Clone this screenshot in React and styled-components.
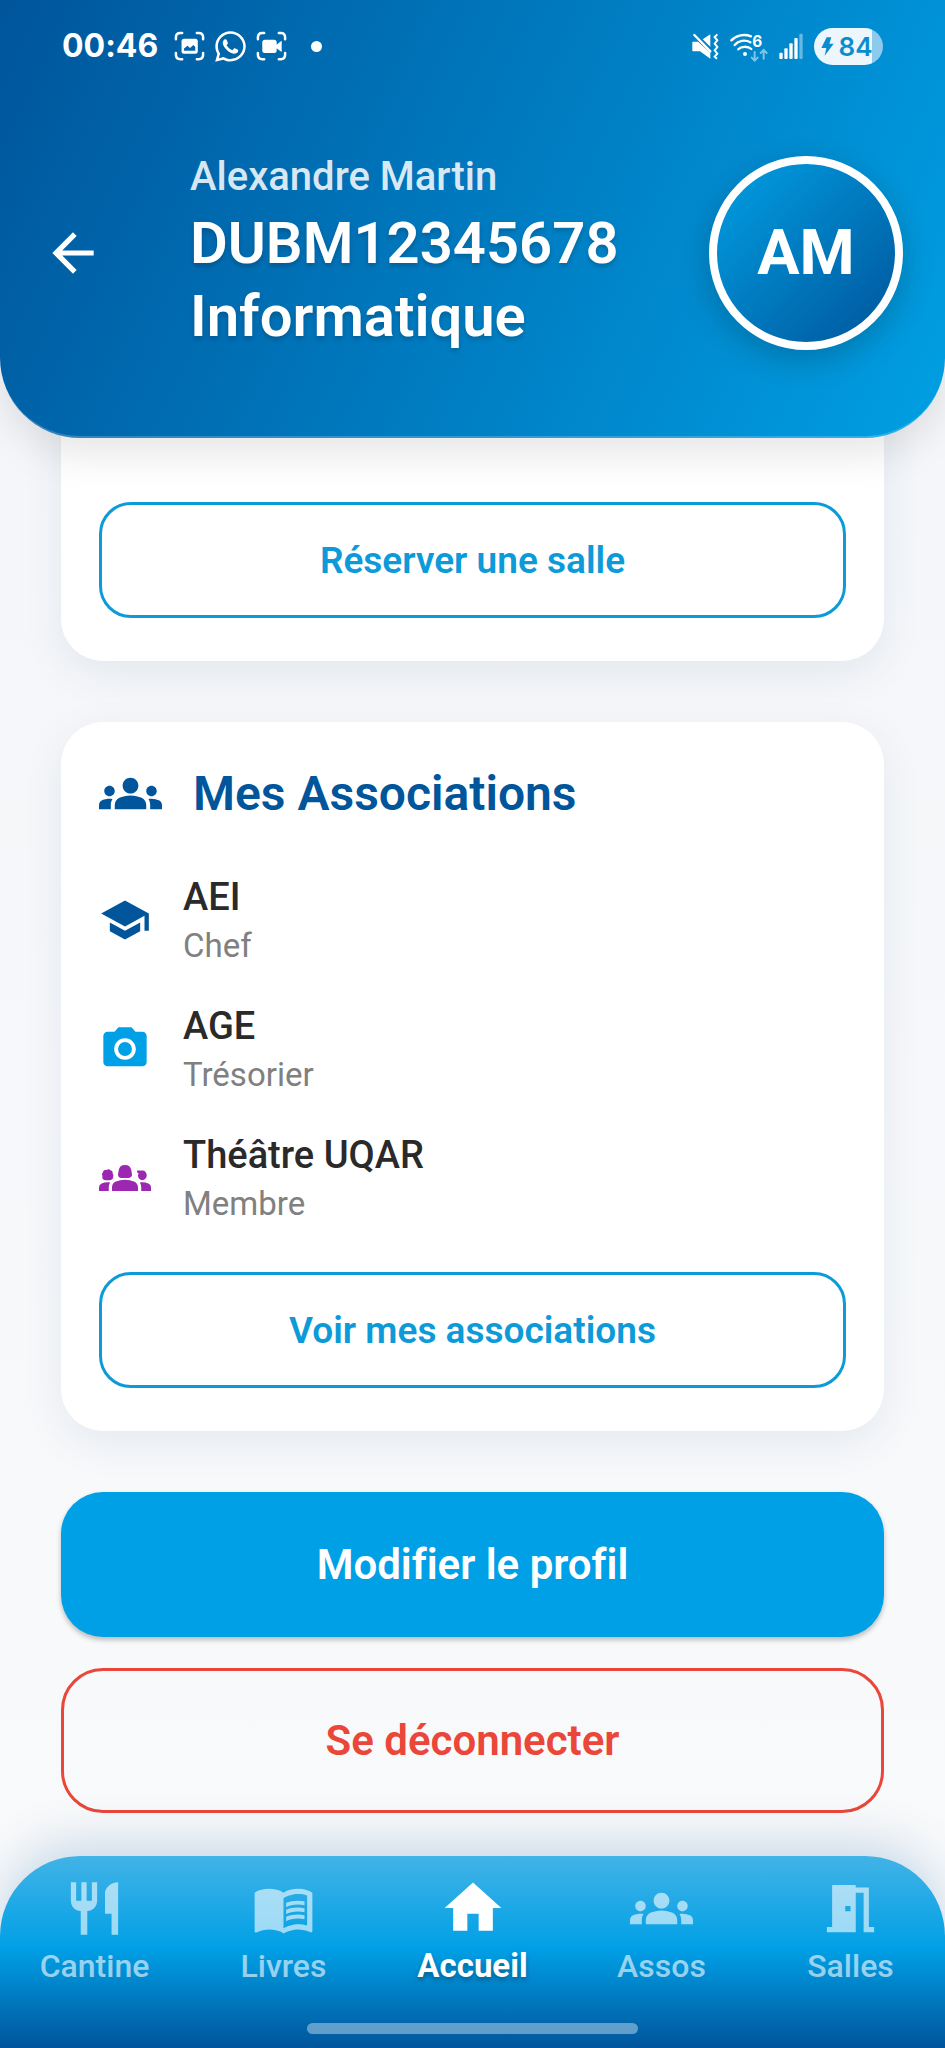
import React from "react";
import styled, { createGlobalStyle, css } from "styled-components";
import {
  MdArrowBack,
  MdGroups,
  MdGroups2,
  MdHome,
  MdMeetingRoom,
  MdMenuBook,
  MdPhotoCamera,
  MdRestaurant,
  MdSchool,
} from "react-icons/md";
import { FaWhatsapp } from "react-icons/fa";

const navy = "#00559b";
const sky = "#009fe3";
const skySoft = "#0c9ad8";
const red = "#ea4639";

const GlobalStyle = createGlobalStyle`
  *, *::before, *::after { box-sizing: border-box; }
  body {
    margin: 0;
    background: #f8fafb;
    font-family: Roboto, "Liberation Sans", sans-serif;
    font-variant-ligatures: none;
  }
  h1, h2, p, ul { margin: 0; padding: 0; }
  ul { list-style: none; }
  svg { display: block; flex: none; }
`;

const Screen = styled.div`
  display: flex;
  flex-direction: column;
  min-height: 100vh;
  background: linear-gradient(#f3f5f9, #f9fafb);
`;

const Header = styled.header`
  position: sticky;
  top: 0;
  z-index: 2;
  border-bottom: 2px solid rgba(255, 255, 255, 0.2);
  border-radius: 0 0 80px 80px;
  background: linear-gradient(115deg, ${navy}, ${sky}) border-box;
  box-shadow: 0 16px 40px rgba(0, 0, 0, 0.1);
  color: #fff;
`;

const StatusBar = styled.div`
  display: flex;
  align-items: center;
  justify-content: space-between;
  height: 92px;
  padding: 0 62px;
  font-family: Inter, sans-serif;
`;

const StatusGroup = styled.div`
  display: flex;
  align-items: center;
  gap: ${(p) => p.$gap}px;
`;

const Clock = styled.time`
  margin-right: 8px;
  font-size: 32px;
  font-weight: 700;
  line-height: 40px;
`;

const Dot = styled.span`
  width: 11px;
  height: 11px;
  margin-left: 16px;
  border-radius: 50%;
  background: #fff;
`;

const Battery = styled.span`
  display: flex;
  align-items: center;
  justify-content: center;
  gap: 5px;
  width: 69px;
  height: 37px;
  padding-right: 4px;
  border-radius: 19px;
  background: linear-gradient(90deg, #ecf6fc 84%, #8ccaee 84%);
  color: #0a8dcd;
  font-size: 26px;
  font-weight: 600;
`;

const Identity = styled.div`
  display: flex;
  align-items: center;
  padding: 60px 42px 83px;
`;

const BackButton = styled.button`
  margin-right: 86px;
  padding: 0;
  border: 0;
  background: none;
  color: inherit;
  font-size: 62px;
`;

const IdentityText = styled.div`
  display: flex;
  flex: 1;
  flex-direction: column;
  gap: 5px;
`;

const PersonName = styled.p`
  color: rgba(255, 255, 255, 0.85);
  font-size: 40px;
  font-weight: 500;
  line-height: 50px;
`;

const PersonCode = styled.h1`
  font-size: 58px;
  font-weight: 600;
  line-height: 73px;
  text-shadow: 0 3px 5px rgba(0, 0, 0, 0.2);
`;

const Avatar = styled.div`
  display: flex;
  align-items: center;
  justify-content: center;
  width: 194px;
  height: 194px;
  border: 8px solid #fff;
  border-radius: 50%;
  background: linear-gradient(135deg, ${sky}, ${navy});
  box-shadow: 0 10px 32px rgba(0, 0, 0, 0.2);
  font-size: 63px;
  font-weight: 700;
`;

const Content = styled.main`
  display: flex;
  flex-direction: column;
  padding: 0 61px 43px;
`;

const Card = styled.section`
  margin-bottom: 61px;
  padding: 40px 38px 43px;
  border-radius: 42px;
  background: #fff;
  box-shadow: 0 12px 42px rgba(0, 60, 110, 0.08);

  ${(p) =>
    p.$tucked &&
    css`
      margin-top: -60px;
      padding-top: 78px;
    `}
`;

const CardHeading = styled.div`
  display: flex;
  align-items: center;
  gap: 31px;
  margin-bottom: 46px;
  color: ${navy};
  font-size: 63px;
`;

const CardTitle = styled.h2`
  font-size: 48px;
  font-weight: 600;
  line-height: 54px;
`;

const AssociationList = styled.ul`
  display: flex;
  flex-direction: column;
  gap: 32px;
`;

const AssociationRow = styled.li`
  display: flex;
  align-items: center;
  gap: 32px;
  color: ${(p) => p.$tint};
  font-size: 52px;
`;

const AssociationName = styled.p`
  color: #2a2a2a;
  font-size: 38px;
  font-weight: 500;
  line-height: 52px;
`;

const AssociationRole = styled.p`
  color: #808080;
  font-size: 33px;
  line-height: 45px;
`;

const Button = styled.button`
  display: block;
  width: 100%;
  padding: 0;
  border: 3px solid currentColor;
  background: none;
  font-family: inherit;
  font-variant-ligatures: inherit;
`;

const CardButton = styled(Button)`
  height: 116px;
  margin-top: 46px;
  border-radius: 32px;
  color: ${skySoft};
  font-size: 37px;
  font-weight: 600;
`;

const PageButton = styled(Button)`
  height: 145px;
  border-radius: 42px;
  color: ${red};
  font-size: 42px;
  font-weight: 600;

  & + & {
    margin-top: 31px;
  }

  ${(p) =>
    p.$filled &&
    css`
      border: 0;
      background: #00a0e6;
      box-shadow: 0 3px 5px rgba(0, 0, 0, 0.25);
      color: #fff;
    `}
`;

const BottomBar = styled.nav`
  position: sticky;
  bottom: 0;
  z-index: 2;
  display: flex;
  flex-direction: column;
  align-items: center;
  margin-top: auto;
  padding: 18px 0 14px;
  border-radius: 80px 80px 0 0;
  background: linear-gradient(#42b3e6, #00a0e6 48%, ${navy});
  box-shadow: 0 -12px 50px rgba(0, 85, 155, 0.2);
`;

const Tabs = styled.ul`
  display: flex;
  width: 100%;
`;

const Tab = styled.li`
  flex: 1;
`;

const TabLink = styled.a`
  display: flex;
  flex-direction: column;
  align-items: center;
  gap: 4px;
  color: ${(p) => (p.$active ? "#fff" : "rgba(255, 255, 255, 0.6)")};
  font-size: ${(p) => (p.$active ? 33 : 32)}px;
  font-weight: ${(p) => (p.$active ? 700 : 500)};
  line-height: 40px;
  text-decoration: none;
  text-shadow: ${(p) => (p.$active ? "0 3px 5px rgba(0, 0, 0, 0.3)" : "none")};
`;

const TabIcon = styled.span`
  display: flex;
  align-items: center;
  height: 68px;
  font-size: ${(p) => (p.$active ? 68 : 63)}px;
`;

const HomeIndicator = styled.div`
  width: 35%;
  height: 11px;
  margin-top: 37px;
  border-radius: 6px;
  background: rgba(255, 255, 255, 0.38);
`;

const CaptureFrame = ({ children }) => (
  <svg width="31" height="30" viewBox="0 0 99 96" fill="none" stroke="#fff" strokeWidth="8" strokeLinecap="round">
    <path d="M6 26V20Q6 6 20 6H26M73 6H79Q93 6 93 20V26M93 70V76Q93 90 79 90H73M26 90H20Q6 90 6 76V70" />
    {children}
  </svg>
);

const ScreenshotIcon = () => (
  <CaptureFrame>
    <rect x="24" y="25" width="52" height="48" rx="8" fill="#fff" stroke="none" />
    <path d="M32 63V56L43 47L51 54L62 45L68 51V63Z" fill="#0064ab" stroke="none" />
  </CaptureFrame>
);

const RecordIcon = () => (
  <CaptureFrame>
    <rect x="20" y="28" width="46" height="42" rx="8" fill="#fff" stroke="none" />
    <path d="M62 46L82 31V67L62 53Z" fill="#fff" stroke="none" />
  </CaptureFrame>
);

const MuteIcon = () => (
  <svg width="29" height="28" viewBox="0 0 87 84" fill="#fff">
    <path d="M9 29H24L61 62V80L30 58H9Q7 58 7 55V32Q7 29 9 29Z" />
    <path d="M38 22L61 7V44Z" />
    <path d="M13 9L61 58" stroke="#fff" strokeWidth="7" strokeLinecap="round" />
    <path d="M82 7L74 15L82 25L74 35L82 45L74 55L82 65L74 74L81 80" fill="none" stroke="#fff" strokeWidth="6" />
  </svg>
);

const WifiIcon = () => (
  <svg width="39" height="33" viewBox="0 -10 117 99" fill="none" stroke="#fff" strokeWidth="7" strokeLinecap="round">
    <path d="M7 21C22 5 46 1 66 9M17 35C28 22 48 18 64 27M28 48C37 38 57 38 67 47" />
    <circle cx="48" cy="62" r="6" fill="#fff" stroke="none" />
    <text x="70" y="40" fill="#fff" stroke="none" fontFamily="Inter, sans-serif" fontWeight="700" fontSize="46">
      6
    </text>
    <g opacity="0.5" strokeWidth="6">
      <path d="M77 56V82M68 73L77 82L86 73" />
      <path d="M104 76V50M95 59L104 50L113 59" />
    </g>
  </svg>
);

const SignalIcon = () => (
  <svg width="26" height="28" viewBox="0 0 78 84" fill="#fff">
    <rect x="4" y="62" width="10" height="19" rx="3" />
    <rect x="19" y="49" width="10" height="32" rx="3" />
    <rect x="34" y="34" width="10" height="47" rx="3" />
    <rect x="49" y="18" width="10" height="63" rx="3" />
    <rect x="64" y="5" width="10" height="76" rx="3" opacity="0.4" />
  </svg>
);

const BoltIcon = () => (
  <svg width="13" height="19" viewBox="0 0 39 57" fill="currentColor">
    <path d="M17 1H31L25 20H38L11 56L16 33H1Z" />
  </svg>
);

const associations = [
  { name: "AEI", role: "Chef", Icon: MdSchool, tint: navy },
  { name: "AGE", role: "Trésorier", Icon: MdPhotoCamera, tint: "#00a0e6" },
  { name: "Théâtre UQAR", role: "Membre", Icon: MdGroups2, tint: "#9c27b0" },
];

const tabs = [
  { label: "Cantine", Icon: MdRestaurant },
  { label: "Livres", Icon: MdMenuBook },
  { label: "Accueil", Icon: MdHome, active: true },
  { label: "Assos", Icon: MdGroups },
  { label: "Salles", Icon: MdMeetingRoom },
];

export default function App() {
  return (
    <>
      <GlobalStyle />
      <Screen>
        <Header>
          <StatusBar>
            <StatusGroup $gap={8}>
              <Clock>00:46</Clock>
              <ScreenshotIcon />
              <FaWhatsapp size={35} />
              <RecordIcon />
              <Dot />
            </StatusGroup>
            <StatusGroup $gap={10}>
              <MuteIcon />
              <WifiIcon />
              <SignalIcon />
              <Battery>
                <BoltIcon />
                84
              </Battery>
            </StatusGroup>
          </StatusBar>
          <Identity>
            <BackButton type="button" aria-label="Retour">
              <MdArrowBack />
            </BackButton>
            <IdentityText>
              <PersonName>Alexandre Martin</PersonName>
              <PersonCode>
                DUBM12345678
                <br />
                Informatique
              </PersonCode>
            </IdentityText>
            <Avatar>AM</Avatar>
          </Identity>
        </Header>

        <Content>
          <Card $tucked>
            <CardButton type="button">Réserver une salle</CardButton>
          </Card>

          <Card>
            <CardHeading>
              <MdGroups />
              <CardTitle>Mes Associations</CardTitle>
            </CardHeading>
            <AssociationList>
              {associations.map(({ name, role, Icon, tint }) => (
                <AssociationRow key={name} $tint={tint}>
                  <Icon />
                  <div>
                    <AssociationName>{name}</AssociationName>
                    <AssociationRole>{role}</AssociationRole>
                  </div>
                </AssociationRow>
              ))}
            </AssociationList>
            <CardButton type="button">Voir mes associations</CardButton>
          </Card>

          <PageButton type="button" $filled>
            Modifier le profil
          </PageButton>
          <PageButton type="button">Se déconnecter</PageButton>
        </Content>

        <BottomBar>
          <Tabs>
            {tabs.map(({ label, Icon, active }) => (
              <Tab key={label}>
                <TabLink href="#" $active={active} aria-current={active ? "page" : undefined}>
                  <TabIcon $active={active}>
                    <Icon />
                  </TabIcon>
                  {label}
                </TabLink>
              </Tab>
            ))}
          </Tabs>
          <HomeIndicator />
        </BottomBar>
      </Screen>
    </>
  );
}
